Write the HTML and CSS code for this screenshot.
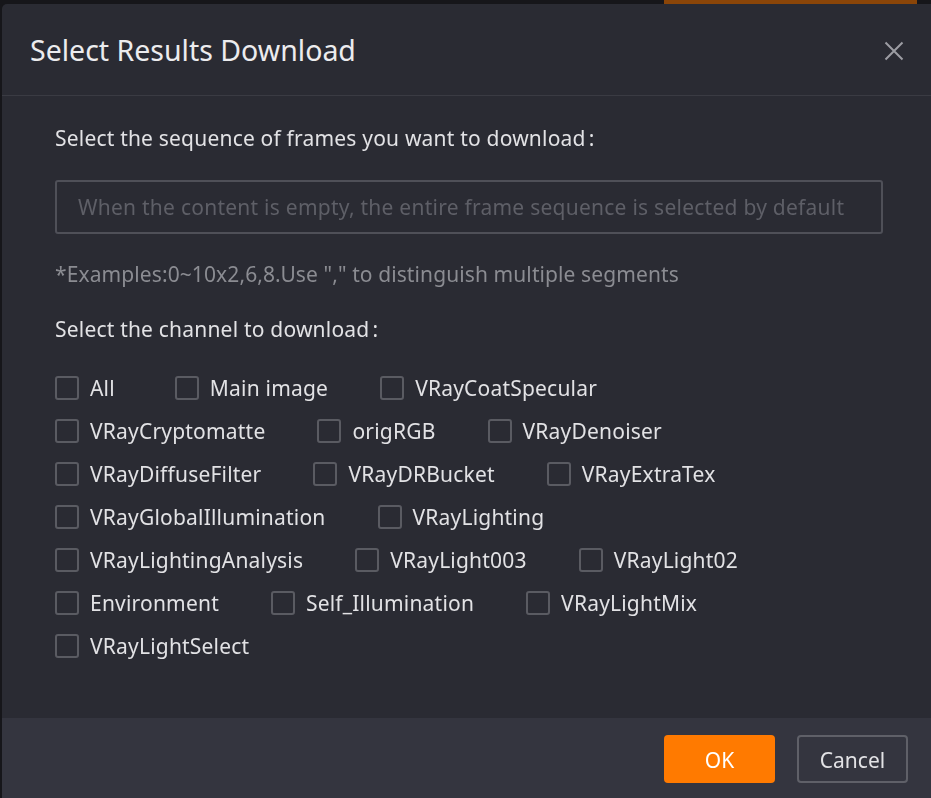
FILE: index.html
```html
<!DOCTYPE html>
<html lang="en">
<head>
<meta charset="utf-8">
<title>Select Results Download</title>
<link rel="stylesheet" href="styles.css">
</head>
<body>
<div class="page">
  <div class="topbar"><div class="topbar-btn"></div></div>
</div>
<div class="modal">
  <div class="modal-header">
    <h2 class="modal-title">Select Results Download</h2>
    <button class="modal-close" aria-label="Close">
      <svg width="20" height="20" viewBox="0 0 20 20"><path d="M1.5 1.5 L18.5 18.5 M18.5 1.5 L1.5 18.5" stroke="#9c9da3" stroke-width="2" fill="none"/></svg>
    </button>
  </div>
  <div class="modal-body">
    <p class="label">Select the sequence of frames you want to download<span class="colon">:</span></p>
    <input class="frames-input" type="text" placeholder="When the content is empty, the entire frame sequence is selected by default">
    <p class="hint">*Examples:0~10x2,6,8.Use "," to distinguish multiple segments</p>
    <p class="label label-channel">Select the channel to download<span class="colon">:</span></p>
    <div class="channels">
      <div class="row">
        <label class="check check-all"><span class="box"></span><span>All</span></label>
        <label class="check"><span class="box"></span><span>Main image</span></label>
        <label class="check"><span class="box"></span><span>VRayCoatSpecular</span></label>
      </div>
      <div class="row">
        <label class="check"><span class="box"></span><span>VRayCryptomatte</span></label>
        <label class="check"><span class="box"></span><span>origRGB</span></label>
        <label class="check"><span class="box"></span><span>VRayDenoiser</span></label>
      </div>
      <div class="row">
        <label class="check"><span class="box"></span><span>VRayDiffuseFilter</span></label>
        <label class="check"><span class="box"></span><span>VRayDRBucket</span></label>
        <label class="check"><span class="box"></span><span>VRayExtraTex</span></label>
      </div>
      <div class="row">
        <label class="check"><span class="box"></span><span>VRayGlobalIllumination</span></label>
        <label class="check"><span class="box"></span><span>VRayLighting</span></label>
      </div>
      <div class="row">
        <label class="check"><span class="box"></span><span>VRayLightingAnalysis</span></label>
        <label class="check"><span class="box"></span><span>VRayLight003</span></label>
        <label class="check"><span class="box"></span><span>VRayLight02</span></label>
      </div>
      <div class="row">
        <label class="check"><span class="box"></span><span>Environment</span></label>
        <label class="check"><span class="box"></span><span>Self_Illumination</span></label>
        <label class="check"><span class="box"></span><span>VRayLightMix</span></label>
      </div>
      <div class="row">
        <label class="check"><span class="box"></span><span>VRayLightSelect</span></label>
      </div>
    </div>
  </div>
  <div class="modal-footer">
    <button class="btn btn-primary">OK</button>
    <button class="btn btn-default">Cancel</button>
  </div>
</div>
</body>
</html>
```
FILE: styles.css
```css
* { box-sizing: border-box; }
html, body {
  margin: 0;
  padding: 0;
  height: 100%;
  overflow: hidden;
  background: #16161a;
  font-family: "Noto Sans", "Open Sans", sans-serif;
}
.page { height: 100%; }
.topbar {
  height: 4px;
  display: flex;
  padding-left: 664px;
}
.topbar-btn {
  width: 253px;
  height: 4px;
  background: #8a4508;
}
.modal {
  position: fixed;
  top: 4px;
  left: 2px;
  right: -20px;
  bottom: -20px;
  background: #2a2b33;
  border-radius: 5px;
  display: flex;
  flex-direction: column;
}
.modal-header {
  height: 92px;
  border-bottom: 1px solid #3a3b43;
  display: flex;
  align-items: center;
  padding-left: 28px;
  padding-right: 47px;
}
.modal-title {
  flex: 1;
  margin: 0;
  font-size: 28.5px;
  font-weight: 400;
  color: #ececee;
  letter-spacing: 0;
}
.modal-close {
  background: none;
  border: 0;
  padding: 0;
  width: 20px;
  height: 20px;
  margin-top: 3px;
  cursor: pointer;
}
.modal-close svg { display: block; }
.modal-body {
  padding: 28px 0 51px 53px;
}
.label {
  margin: 0;
  font-size: 21px;
  line-height: 28px;
  color: #e2e2e5;
  letter-spacing: 0.2px;
}
.colon { margin-left: 3px; }
.frames-input {
  display: block;
  margin-top: 28px;
  width: 828px;
  height: 54px;
  background: transparent;
  border: 2px solid #4f5058;
  border-radius: 3px;
  padding: 0 21px;
  font-family: inherit;
  font-size: 21px;
  letter-spacing: 0.25px;
  color: #e2e2e5;
  outline: none;
}
.frames-input::placeholder { color: #5e5f67; }
.hint {
  margin: 26px 0 0;
  font-size: 21px;
  line-height: 28px;
  letter-spacing: 0.1px;
  color: #8b8c92;
}
.label-channel { margin-top: 27px; }
.channels { margin-top: 23px; }
.row {
  display: flex;
  height: 43px;
  align-items: center;
}
.check {
  display: flex;
  align-items: center;
  margin-right: 52px;
  font-size: 21px;
  letter-spacing: 0.2px;
  color: #e2e2e5;
  cursor: pointer;
}
.check-all { margin-right: 60px; }
.box {
  width: 24px;
  height: 24px;
  border: 2px solid #5a5b62;
  border-radius: 3px;
  margin-right: 11px;
}
.modal-footer {
  flex: 1;
  background: #34353f;
  display: flex;
  align-items: flex-start;
  padding: 17px 0 0 662px;
  gap: 22px;
}
.btn {
  height: 48px;
  border-radius: 4px;
  font-family: inherit;
  font-size: 21px;
  padding-top: 2px;
  cursor: pointer;
}
.btn-primary {
  width: 111px;
  background: #ff7a00;
  border: 0;
  color: #ffffff;
}
.btn-default {
  width: 111px;
  background: transparent;
  border: 2px solid #5f6068;
  color: #e2e2e5;
}
```
